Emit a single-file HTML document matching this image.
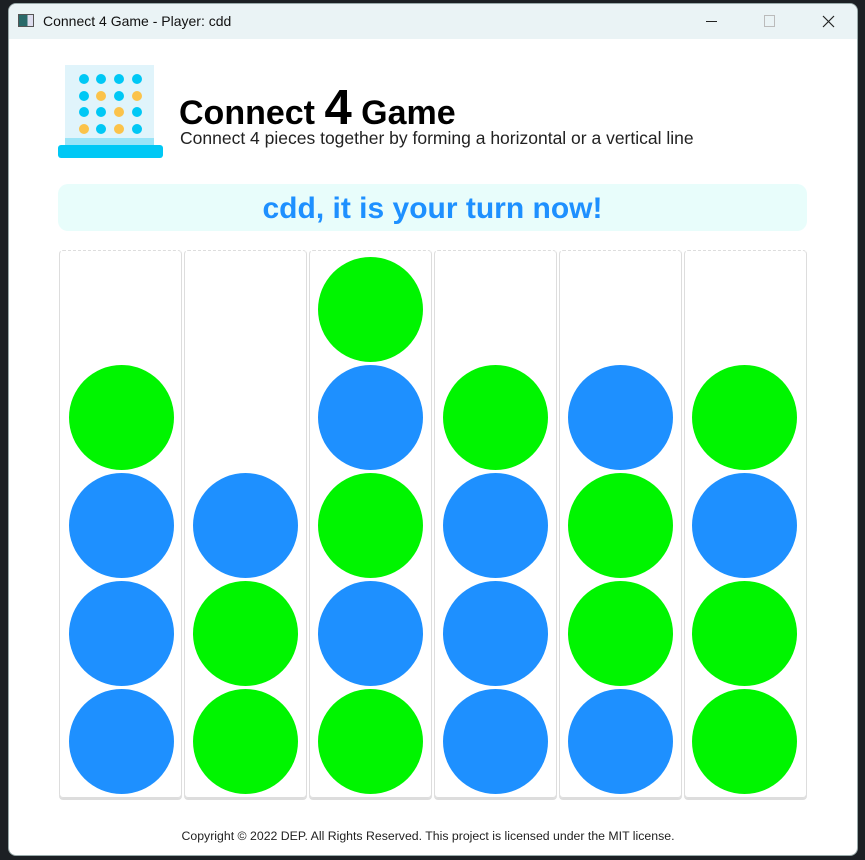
<!DOCTYPE html>
<html><head><meta charset="utf-8"><style>
*{margin:0;padding:0;box-sizing:border-box}
body{width:865px;height:860px;background:#1c2024;position:relative;overflow:hidden;font-family:"Liberation Sans",sans-serif}
.win{position:absolute;left:8px;top:3px;width:850px;height:853px;background:#fff;border-radius:8px;overflow:hidden;border:1px solid #9aa}
.tb{position:absolute;left:0;top:0;width:100%;height:35px;background:#eaf3f5}
.tb .t{position:absolute;left:34px;top:9px;font-size:14px;color:#111}
.a{position:absolute}
.col{position:absolute;top:250px;width:123px;height:548px;border:1px solid #ddd;border-top:1px dashed #ddd;border-radius:4px;box-shadow:0 2px 0 #ddd}
.c{position:absolute;width:105px;height:105px;border-radius:50%}
.g{background:#00f500}.b{background:#1e90ff}
</style></head><body>
<div class="win">
<div class="tb"><div class="a" style="left:9px;top:10px;width:16px;height:13px;border:1px solid #555;background:linear-gradient(90deg,#2a6a6a 60%,#dde 60%)"></div><div class="t">Connect 4 Game - Player: cdd</div>
<div class="a" style="left:697px;top:17px;width:11px;height:1px;background:#222"></div>
<div class="a" style="left:755px;top:11px;width:11px;height:12px;border:1px solid #bbb"></div>
<svg class="a" style="left:813px;top:11px" width="13" height="13"><path d="M1 1L12 12M12 1L1 12" stroke="#222" stroke-width="1.2"/></svg></div>
</div>
<div class="a" style="left:65px;top:65px;width:89px;height:85px;background:#e0f4fb"></div>
<div class="a" style="left:65px;top:138px;width:89px;height:8px;background:#9ae4f7"></div>
<div class="a" style="left:58px;top:145px;width:105px;height:13px;background:#00c8f5;border-radius:3px"></div>
<svg class="a" style="left:65px;top:65px" width="89" height="80">
<g fill="#00c8f5"><circle cx="19" cy="14" r="5"/><circle cx="36" cy="14" r="5"/><circle cx="54" cy="14" r="5"/><circle cx="72" cy="14" r="5"/>
<circle cx="19" cy="31" r="5"/><circle cx="54" cy="31" r="5"/>
<circle cx="19" cy="47" r="5"/><circle cx="36" cy="47" r="5"/><circle cx="72" cy="47" r="5"/>
<circle cx="36" cy="64" r="5"/><circle cx="72" cy="64" r="5"/></g>
<g fill="#fbc34a"><circle cx="36" cy="31" r="5"/><circle cx="72" cy="31" r="5"/><circle cx="54" cy="47" r="5"/><circle cx="19" cy="64" r="5"/><circle cx="54" cy="64" r="5"/></g></svg>
<div class="a" style="left:179px;top:80px;font-size:34px;font-weight:bold;color:#000;white-space:nowrap">Connect <span style="font-size:49px">4</span> Game</div>
<div class="a" style="left:180px;top:128px;font-size:17.5px;color:#222;white-space:nowrap">Connect 4 pieces together by forming a horizontal or a vertical line</div>
<div class="a" style="left:58px;top:184px;width:749px;height:47px;background:#e8fdfb;border-radius:10px;text-align:center;font-size:30px;font-weight:bold;color:#1e90ff;line-height:49px">cdd, it is your turn now!</div>
<div class="col" style="left:59px"></div><div class="col" style="left:184px"></div><div class="col" style="left:309px"></div><div class="col" style="left:434px"></div><div class="col" style="left:559px"></div><div class="col" style="left:684px"></div>
<div class="c g" style="left:69px;top:365px"></div><div class="c b" style="left:69px;top:473px"></div><div class="c b" style="left:69px;top:581px"></div><div class="c b" style="left:69px;top:689px"></div>
<div class="c b" style="left:193px;top:473px"></div><div class="c g" style="left:193px;top:581px"></div><div class="c g" style="left:193px;top:689px"></div>
<div class="c g" style="left:318px;top:257px"></div><div class="c b" style="left:318px;top:365px"></div><div class="c g" style="left:318px;top:473px"></div><div class="c b" style="left:318px;top:581px"></div><div class="c g" style="left:318px;top:689px"></div>
<div class="c g" style="left:443px;top:365px"></div><div class="c b" style="left:443px;top:473px"></div><div class="c b" style="left:443px;top:581px"></div><div class="c b" style="left:443px;top:689px"></div>
<div class="c b" style="left:568px;top:365px"></div><div class="c g" style="left:568px;top:473px"></div><div class="c g" style="left:568px;top:581px"></div><div class="c b" style="left:568px;top:689px"></div>
<div class="c g" style="left:692px;top:365px"></div><div class="c b" style="left:692px;top:473px"></div><div class="c g" style="left:692px;top:581px"></div><div class="c g" style="left:692px;top:689px"></div>
<div class="a" style="left:0;width:856px;top:829px;text-align:center;font-size:12.3px;color:#222">Copyright © 2022 DEP. All Rights Reserved. This project is licensed under the MIT license.</div>
</body></html>
